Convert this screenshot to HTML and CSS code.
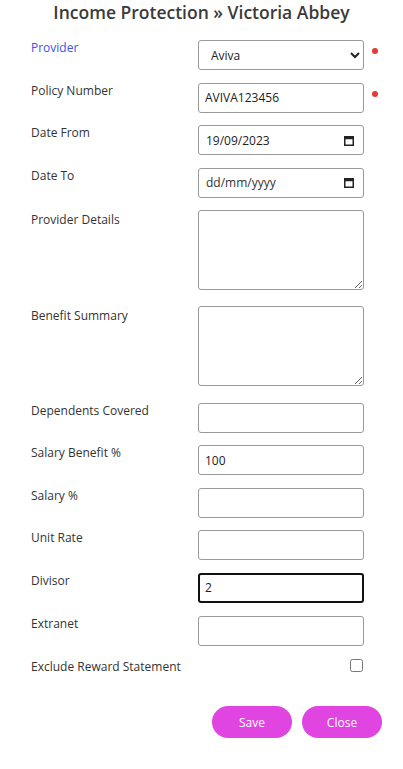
FILE: index.html
```html
<!DOCTYPE html>
<html lang="en">
<head>
    <meta charset="UTF-8">
    <meta name="viewport" content="width=device-width, initial-scale=1.0">
    <title>Income Protection</title>
    <link rel="stylesheet" href="styles.css">
</head>
<body>
    <h1 class="title">Income Protection » Victoria Abbey</h1>

    <form class="edit-form">
        <label class="field-label link">Provider</label>
        <select class="field">
            <option>Aviva</option>
        </select>
        <span class="required"></span>

        <label class="field-label">Policy Number</label>
        <input class="field" type="text" value="AVIVA123456">
        <span class="required"></span>

        <label class="field-label">Date From</label>
        <div class="field date-field">
            <input type="text" value="19/09/2023">
            <svg class="cal" width="10" height="11" viewBox="0 0 10 11"><rect x="0.75" y="1.75" width="8.5" height="8.5" fill="none" stroke="#222" stroke-width="1.5"/><rect x="0.75" y="1.75" width="8.5" height="2.5" fill="#222"/></svg>
        </div>
        <span></span>

        <label class="field-label">Date To</label>
        <div class="field date-field">
            <input type="text" placeholder="dd/mm/yyyy">
            <svg class="cal" width="10" height="11" viewBox="0 0 10 11"><rect x="0.75" y="1.75" width="8.5" height="8.5" fill="none" stroke="#222" stroke-width="1.5"/><rect x="0.75" y="1.75" width="8.5" height="2.5" fill="#222"/></svg>
        </div>
        <span></span>

        <label class="field-label pad">Provider Details</label>
        <textarea class="field area"></textarea>
        <span></span>

        <label class="field-label pad">Benefit Summary</label>
        <textarea class="field area"></textarea>
        <span></span>

        <label class="field-label">Dependents Covered</label>
        <input class="field" type="text">
        <span></span>

        <label class="field-label">Salary Benefit %</label>
        <input class="field" type="text" value="100">
        <span></span>

        <label class="field-label">Salary %</label>
        <input class="field" type="text">
        <span></span>

        <label class="field-label">Unit Rate</label>
        <input class="field" type="text">
        <span></span>

        <label class="field-label">Divisor</label>
        <input class="field active" type="text" value="2">
        <span></span>

        <label class="field-label">Extranet</label>
        <input class="field" type="text">
        <span></span>

        <label class="field-label check-label">Exclude Reward Statement</label>
        <div class="check-cell"><input type="checkbox"></div>
        <span></span>
    </form>

    <div class="actions">
        <button class="btn">Save</button>
        <button class="btn">Close</button>
    </div>
</body>
</html>
```

FILE: styles.css
```css
body {
    margin: 0;
    font-family: "Open Sans", "Noto Sans", sans-serif;
    color: #333;
    background: #fff;
}
.title {
    margin: 0;
    font-size: 17.5px;
    font-weight: 600;
    line-height: 24px;
    text-align: center;
    color: #3a3a3a;
}
.edit-form {
    display: grid;
    grid-template-columns: 167px 166px 14px;
    row-gap: 12.6px;
    padding: 16px 0 0 31px;
    align-items: start;
}
.field-label {
    font-size: 12px;
    line-height: 16px;
    color: #333;
}
.field-label.link {
    color: #3d52e6;
}
.field-label.pad {
    padding-top: 2px;
}
.field {
    box-sizing: border-box;
    width: 166px;
    height: 30px;
    margin: 0;
    border: 1px solid #999;
    border-radius: 3px;
    background: #fff;
    font-family: "Open Sans", "Noto Sans", sans-serif;
    font-size: 12px;
    color: #222;
    padding: 0 6px;
}
select.field {
    padding-left: 8px;
}
.field.active {
    border: 2px solid #111;
    padding-left: 5px;
    outline: none;
}
.field.area {
    height: 80px;
    margin-bottom: 3.5px;
    resize: vertical;
}
.date-field {
    display: flex;
    align-items: center;
    padding: 0 9px 0 7px;
}
.date-field input {
    flex: 1;
    min-width: 0;
    border: none;
    padding: 0;
    font-family: inherit;
    font-size: 12px;
    color: #222;
    outline: none;
    background: transparent;
}
.date-field input::placeholder {
    color: #333;
}
.required {
    justify-self: end;
    width: 6px;
    height: 6px;
    margin-top: 8px;
    border-radius: 50%;
    background: #e53935;
}
.check-label {
    padding-top: 1px;
}
.check-cell {
    display: flex;
    justify-content: flex-end;
    padding: 1px 0 0;
}
.check-cell input {
    width: 13px;
    height: 13px;
    margin: 0 1px 0 0;
}
.actions {
    display: flex;
    justify-content: flex-end;
    gap: 10px;
    padding: 31px 21px 0 0;
}
.btn {
    width: 80px;
    height: 32px;
    border: none;
    border-radius: 16px;
    background: #e045e2;
    color: #fff;
    font-family: "Open Sans", "Noto Sans", sans-serif;
    font-size: 12px;
}
```
